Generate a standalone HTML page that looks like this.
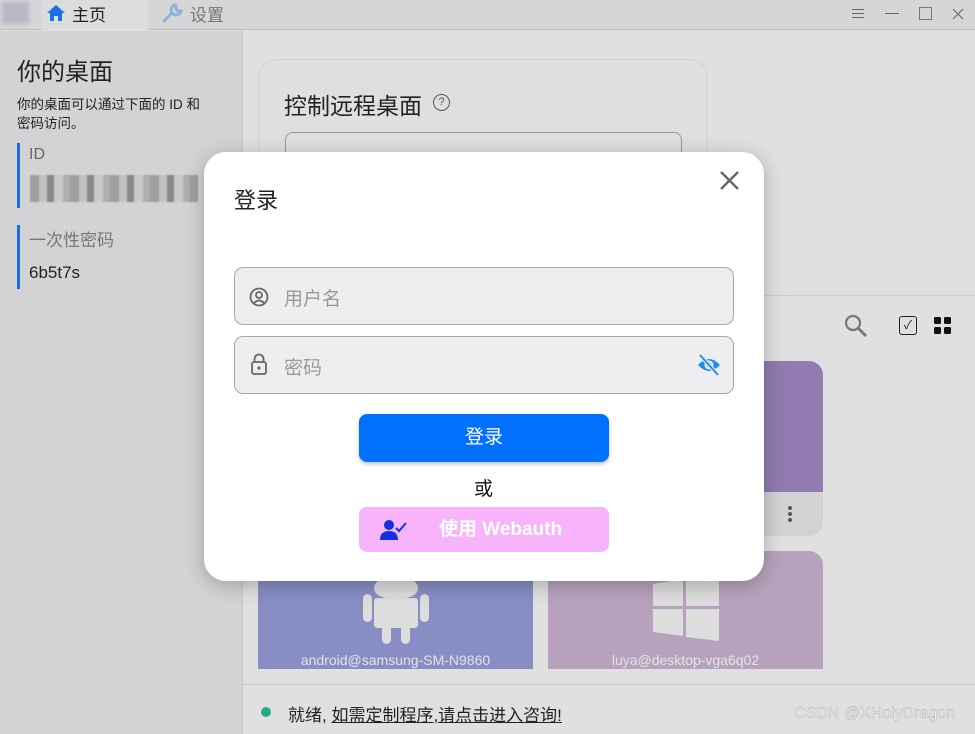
<!DOCTYPE html>
<html><head><meta charset="utf-8"><style>
*{margin:0;padding:0;box-sizing:border-box}
body{width:975px;height:734px;overflow:hidden;position:relative;font-family:"Liberation Sans","Noto Sans CJK SC",sans-serif;background:#e0e0e0;color:#222}
.abs{position:absolute}
</style></head><body>
<div class="abs" style="left:0;top:0;width:975px;height:30px;background:#d6d6d9;border-bottom:1px solid #bdbdc0"></div>
<div class="abs" style="left:2px;top:2px;width:27px;height:22px;background:#b8b8c4;filter:blur(2px)"></div>
<div class="abs" style="left:41px;top:0;width:107px;height:30px;background:#dcdcde"></div>
<svg class="abs" style="left:46px;top:4px" width="20" height="18" viewBox="0 0 20 18"><path d="M10 1 L1 9 H4 V17 H8 V12 H12 V17 H16 V9 H19 Z" fill="#1a6fe6"/></svg>
<div class="abs" style="left:72px;top:1px;font-size:17px;color:#222">主页</div>
<svg class="abs" style="left:161px;top:3px" width="22" height="22" viewBox="0 0 22 22"><path d="M3 18 L11 10 M14 2 a5 5 0 1 0 6 6 l-3 0 l-2-2 l0-3z" stroke="#8fb0d8" stroke-width="3" fill="none" stroke-linecap="round"/></svg>
<div class="abs" style="left:190px;top:1px;font-size:17px;color:#777">设置</div>
<div class="abs" style="left:852px;top:9px;width:12px;height:9px;border-top:1.2px solid #666;border-bottom:1.2px solid #666"></div>
<div class="abs" style="left:852px;top:13px;width:12px;height:1.2px;background:#666"></div>
<div class="abs" style="left:885px;top:13px;width:14px;height:1px;background:#666"></div>
<div class="abs" style="left:919px;top:7px;width:13px;height:13px;border:1.2px solid #777"></div>
<svg class="abs" style="left:952px;top:8px" width="12" height="12"><path d="M1 1L11 11M11 1L1 11" stroke="#666" stroke-width="1.1"/></svg>
<div class="abs" style="left:0;top:31px;width:243px;height:703px;background:#d3d3d6;border-right:1px solid #c6c6c9"></div>
<div class="abs" style="left:17px;top:52px;font-size:24px;color:#222">你的桌面</div>
<div class="abs" style="left:17px;top:95px;font-size:13.5px;line-height:19px;color:#222;width:215px">你的桌面可以通过下面的 ID 和<br>密码访问。</div>
<div class="abs" style="left:17px;top:143px;width:3px;height:65px;background:#1a6fe6"></div>
<div class="abs" style="left:29px;top:146px;font-size:16px;color:#666">ID</div>
<div class="abs" style="left:30px;top:175px;width:168px;height:27px;background:repeating-linear-gradient(90deg,#8e8e91 0 9px,#bcbcbf 9px 17px,#727275 17px 24px,#c6c6c9 24px 33px,#a3a3a6 33px 40px);opacity:.75;filter:blur(.6px)"></div>
<div class="abs" style="left:17px;top:225px;width:3px;height:64px;background:#1a6fe6"></div>
<div class="abs" style="left:29px;top:226px;font-size:17px;color:#777">一次性密码</div>
<div class="abs" style="left:29px;top:263px;font-size:17px;color:#222">6b5t7s</div>
<div class="abs" style="left:258px;top:59px;width:450px;height:240px;border:1px solid #d2d2d2;border-radius:18px;background:#dfdfdf"></div>
<div class="abs" style="left:284px;top:87px;font-size:23px;color:#222">控制远程桌面</div>
<div class="abs" style="left:433px;top:94px;width:17px;height:17px;border:1.5px solid #555;border-radius:50%;font-size:11px;text-align:center;line-height:14px;color:#555">?</div>
<div class="abs" style="left:285px;top:132px;width:397px;height:40px;border:1px solid #999;border-radius:8px"></div>
<div class="abs" style="left:708px;top:295px;width:267px;height:1px;background:#ccc"></div>
<svg class="abs" style="left:844px;top:314px" width="24" height="24"><circle cx="9" cy="9" r="7" stroke="#777" stroke-width="2.2" fill="none"/><path d="M14 14L22 22" stroke="#777" stroke-width="3"/></svg>
<div class="abs" style="left:899px;top:316px;width:18px;height:19px;border:1.5px solid #222;border-radius:3px;font-size:12px;text-align:center;line-height:16px">✓</div>
<div class="abs" style="left:934px;top:317px;width:7px;height:7px;background:#111;border-radius:1.5px"></div>
<div class="abs" style="left:944px;top:317px;width:7px;height:7px;background:#111;border-radius:1.5px"></div>
<div class="abs" style="left:934px;top:327px;width:7px;height:7px;background:#111;border-radius:1.5px"></div>
<div class="abs" style="left:944px;top:327px;width:7px;height:7px;background:#111;border-radius:1.5px"></div>
<div class="abs" style="left:548px;top:361px;width:275px;height:175px;border-radius:14px;overflow:hidden;background:#d2d2d4">
<div style="height:131px;background:#917bb0"></div></div>
<div class="abs" style="left:788px;top:506px;width:4px;height:4px;border-radius:50%;background:#555;box-shadow:0 6px 0 #555,0 12px 0 #555"></div>
<div class="abs" style="left:258px;top:551px;width:275px;height:118px;border-radius:14px 14px 0 0;background:#888dc4"></div>
<div class="abs" style="left:548px;top:551px;width:275px;height:118px;border-radius:14px 14px 0 0;background:#b8a1bd"></div>
<svg class="abs" style="left:362px;top:570px" width="68" height="74"><rect x="12" y="8" width="44" height="20" rx="14" fill="#ddd"/><rect x="12" y="28" width="44" height="30" rx="3" fill="#ddd"/><rect x="1" y="24" width="9" height="28" rx="4.5" fill="#ddd"/><rect x="58" y="24" width="9" height="28" rx="4.5" fill="#ddd"/><rect x="20" y="54" width="9" height="20" rx="4.5" fill="#ddd"/><rect x="39" y="54" width="9" height="20" rx="4.5" fill="#ddd"/></svg>
<svg class="abs" style="left:653px;top:575px" width="66" height="66"><path d="M0 9 L30 4 V31 H0Z M33 3 L66 0 V31 H33Z M0 34 H30 V61 L0 57Z M33 34 H66 V66 L33 62Z" fill="#ddd"/></svg>
<div class="abs" style="left:258px;top:652px;width:275px;text-align:center;font-size:14px;color:#e4e4e4">android@samsung-SM-N9860</div>
<div class="abs" style="left:548px;top:652px;width:275px;text-align:center;font-size:14px;color:#e4e4e4">luya@desktop-vga6q02</div>
<div class="abs" style="left:243px;top:684px;width:732px;height:1px;background:#c8c8c8"></div>
<div class="abs" style="left:261px;top:707px;width:10px;height:10px;border-radius:50%;background:#2aa98a"></div>
<div class="abs" style="left:288px;top:701px;font-size:17px;color:#222">就绪, <span style="text-decoration:underline">如需定制程序,请点击进入咨询! </span></div>
<div class="abs" style="left:794px;top:705px;font-size:16px;color:#f0f0f0;-webkit-text-stroke:0.4px #aaa">CSDN @XHolyDragon</div>
<div class="abs" style="left:204px;top:152px;width:560px;height:429px;background:#fff;border-radius:22px;box-shadow:0 4px 20px rgba(0,0,0,.25)"></div>
<div class="abs" style="left:234px;top:183px;font-size:22px;color:#222">登录</div>
<svg class="abs" style="left:720px;top:171px" width="19" height="19"><path d="M1 1L18 18M18 1L1 18" stroke="#666" stroke-width="2.4"/></svg>
<div class="abs" style="left:234px;top:267px;width:500px;height:58px;background:#eeeef0;border:1px solid #a8a8a8;border-radius:9px"></div>
<svg class="abs" style="left:249px;top:287px" width="20" height="20"><circle cx="10" cy="10" r="8.5" stroke="#666" stroke-width="1.8" fill="none"/><circle cx="10" cy="8" r="3" stroke="#666" stroke-width="1.8" fill="none"/><path d="M5 16 Q10 11 15 16" stroke="#666" stroke-width="1.8" fill="none"/></svg>
<div class="abs" style="left:284px;top:284px;font-size:19px;color:#999">用户名</div>
<div class="abs" style="left:234px;top:336px;width:500px;height:58px;background:#eeeef0;border:1px solid #a8a8a8;border-radius:9px"></div>
<svg class="abs" style="left:250px;top:353px" width="18" height="22"><path d="M4.5 9 V6 a4.5 4.5 0 0 1 9 0 V9" stroke="#666" stroke-width="1.8" fill="none"/><rect x="2" y="9" width="14" height="12" rx="2" stroke="#666" stroke-width="1.8" fill="none"/><circle cx="9" cy="15" r="1.6" fill="#666"/></svg>
<div class="abs" style="left:284px;top:353px;font-size:19px;color:#999">密码</div>
<svg class="abs" style="left:697px;top:354px" width="24" height="22" viewBox="0 0 24 22"><path d="M1 11 Q12 -1 23 11 Q12 23 1 11Z" fill="#1e8fe8"/><circle cx="12" cy="11" r="4.5" fill="#eeeef0"/><circle cx="12" cy="11" r="2.5" fill="#1e8fe8"/><path d="M3 1L21 21" stroke="#eeeef0" stroke-width="4"/><path d="M3 1L21 21" stroke="#1e8fe8" stroke-width="2"/></svg>
<div class="abs" style="left:359px;top:414px;width:250px;height:48px;background:#0071ff;border-radius:8px;box-shadow:0 2px 4px rgba(0,0,0,.25);color:#fff;font-size:19px;text-align:center;line-height:48px">登录</div>
<div class="abs" style="left:474px;top:474px;font-size:19px;color:#111">或</div>
<div class="abs" style="left:359px;top:507px;width:250px;height:45px;background:#f7b4fa;border-radius:8px;color:#fff;font-size:19px;font-weight:bold;line-height:45px;padding-left:80px">使用 Webauth</div>
<svg class="abs" style="left:380px;top:519px" width="28" height="22"><circle cx="9" cy="6" r="5" fill="#1130e0"/><path d="M0 21 Q0 12 9 12 Q18 12 18 21Z" fill="#1130e0"/><path d="M16 9 L19 12 L26 4" stroke="#1130e0" stroke-width="2" fill="none"/></svg>
</body></html>
